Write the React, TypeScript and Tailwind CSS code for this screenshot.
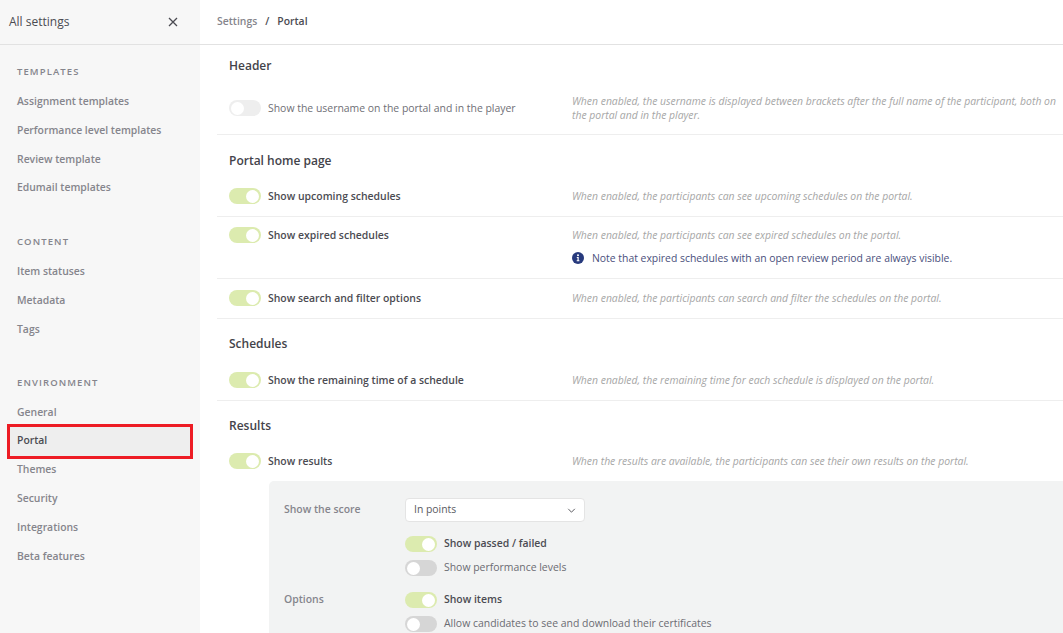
import React from "react";

const font = { fontFamily: '"Open Sans", sans-serif' };

function Toggle({ on, tone = "light" }: { on?: boolean; tone?: "light" | "mid" }) {
  const track = on ? "bg-[#dcebaf]" : tone === "mid" ? "bg-[#d6d6d6]" : "bg-[#eeeeee]";
  return (
    <span className={`flex h-[16px] w-[32px] shrink-0 items-center rounded-full px-[2px] ${track} ${on ? "justify-end" : "justify-start"}`}>
      <span className="h-[13px] w-[13px] rounded-full bg-white" />
    </span>
  );
}

function SideGroup({ title, items, className }: { title: string; items: string[]; className: string }) {
  return (
    <div className={className}>
      <div className="pl-[17px] text-[9.5px] leading-[14px] font-semibold tracking-[1.1px] text-[#85858c]">{title}</div>
      <div className="mt-[8.5px]">
        {items.map((i) => {
          const active = i === "Portal";
          return (
            <div key={i} className={`relative flex h-[28.8px] items-center text-[10.4px] font-semibold ${active ? "mx-[8px] bg-[#eeeeee] pl-[9px] text-[#4b4b52]" : "pl-[17px] text-[#85858c]"}`}>
              {i}
              {active && <span className="absolute -top-[3px] -right-[1px] -bottom-[3px] -left-[1px] border-[3px] border-[#ed1c24]" />}
            </div>
          );
        })}
      </div>
    </div>
  );
}

function Row({ on, label, desc, note, heightClass, desc2 }: { on?: boolean; label: string; desc: string; note?: string; heightClass: string; desc2?: boolean }) {
  return (
    <div className={`flex border-b border-[#eeeeee] pl-[12px] ${heightClass}`}>
      <div className="flex w-[343px] shrink-0 items-start gap-[7px]">
        <Toggle on={on} />
        <span className={`text-[10.45px] leading-[16px] ${on ? "font-semibold text-[#4b4b52]" : "font-normal text-[#6f6f76]"}`}>{label}</span>
      </div>
      <div className="min-w-0 flex-1 pr-[4px]">
        <div className={`text-[10.4px] leading-[14px] text-[#a6a6a6] italic ${desc2 ? "-mt-[6px]" : "mt-[1px]"}`}>{desc}</div>
        {note && (
          <div className="mt-[9px] flex items-center gap-[8px] text-[10.4px] leading-[14px] text-[#4a4f7c]">
            <svg viewBox="0 0 12 12" className="h-[12px] w-[12px] shrink-0">
              <circle cx="6" cy="6" r="6" fill="#273a7d" />
              <circle cx="6" cy="3.2" r="1" fill="#fff" />
              <path d="M4.8 5h1.9v3.3h.7v1H4.7v-1h.8V6h-.7z" fill="#fff" />
            </svg>
            {note}
          </div>
        )}
      </div>
    </div>
  );
}

function Heading({ children, className }: { children: React.ReactNode; className: string }) {
  return <div className={`pl-[12px] text-[12px] leading-[18px] font-semibold text-[#43434a] ${className}`}>{children}</div>;
}

function SubToggle({ on, label, className }: { on?: boolean; label: string; className: string }) {
  return (
    <div className={`flex h-[16px] items-center gap-[7px] ${className}`}>
      <Toggle on={on} tone="mid" />
      <span className={`text-[10.45px] ${on ? "font-semibold text-[#4b4b52]" : "text-[#6b6b72]"}`}>{label}</span>
    </div>
  );
}

export default function App() {
  return (
    <div style={font} className="flex h-[633px] w-[1063px] overflow-hidden bg-white">
      <aside className="w-[200px] shrink-0 bg-[#f7f7f7]">
        <div className="flex h-[45px] items-center justify-between border-b border-[#e2e2e2] pr-[22px] pl-[9px]">
          <span className="text-[12px] text-[#4b4b52]">All settings</span>
          <svg viewBox="0 0 10 10" className="h-[10px] w-[10px]" stroke="#4b4b52" strokeWidth="1.3" fill="none">
            <path d="M1 1l8 8M9 1l-8 8" />
          </svg>
        </div>
        <SideGroup className="pt-[20px]" title="TEMPLATES" items={["Assignment templates", "Performance level templates", "Review template", "Edumail templates"]} />
        <SideGroup className="pt-[32.5px]" title="CONTENT" items={["Item statuses", "Metadata", "Tags"]} />
        <SideGroup className="pt-[31.5px]" title="ENVIRONMENT" items={["General", "Portal", "Themes", "Security", "Integrations", "Beta features"]} />
      </aside>

      <main className="min-w-0 flex-1">
        <div className="flex h-[45px] items-center border-b border-[#e2e2e2] pl-[17px] text-[10.4px] font-semibold">
          <span className="text-[#85858c]">Settings</span>
          <span className="mx-[8px] text-[#4b4b52]">/</span>
          <span className="text-[#4b4b52]">Portal</span>
        </div>
        <div className="pl-[17px]">
          <Heading className="pt-[12px]">Header</Heading>
          <Row heightClass="mt-[25px] h-[35px]" label="Show the username on the portal and in the player" desc2 desc="When enabled, the username is displayed between brackets after the full name of the participant, both on the portal and in the player." />
          <Heading className="pt-[17px]">Portal home page</Heading>
          <Row on heightClass="mt-[16px] h-[31px] pt-[2px]" label="Show upcoming schedules" desc="When enabled, the participants can see upcoming schedules on the portal." />
          <Row on heightClass="h-[62px] pt-[10px]" label="Show expired schedules" desc="When enabled, the participants can see expired schedules on the portal." note="Note that expired schedules with an open review period are always visible." />
          <Row on heightClass="h-[40px] pt-[11px]" label="Show search and filter options" desc="When enabled, the participants can search and filter the schedules on the portal." />
          <Heading className="pt-[16px]">Schedules</Heading>
          <Row on heightClass="mt-[17px] h-[31px] pt-[2px]" label="Show the remaining time of a schedule" desc="When enabled, the remaining time for each schedule is displayed on the portal." />
          <Heading className="pt-[16px]">Results</Heading>
          <div className="mt-[18px] flex pl-[12px]">
            <div className="flex w-[343px] shrink-0 items-start gap-[7px]">
              <Toggle on />
              <span className="text-[10.45px] leading-[16px] font-semibold text-[#4b4b52]">Show results</span>
            </div>
            <div className="mt-[1px] text-[10.4px] leading-[14px] text-[#a6a6a6] italic">When the results are available, the participants can see their own results on the portal.</div>
          </div>
          <div className="mt-[12px] ml-[52px] h-[160px] rounded-l-[5px] bg-[#f2f3f3] pt-[17px] pl-[15px]">
            <div className="flex">
              <div className="w-[121px] shrink-0 pt-[3px] text-[10.45px] leading-[16px] font-semibold text-[#85858c]">Show the score</div>
              <div className="flex h-[24px] w-[180px] items-center justify-between rounded-[4px] border border-[#e4e4e4] bg-white pr-[8px] pl-[8px] text-[10.4px] text-[#5a5a61]">
                In points
                <svg viewBox="0 0 10 6" className="h-[5px] w-[9px]" stroke="#4b4b52" strokeWidth="1.1" fill="none">
                  <path d="M1 1l4 4 4-4" />
                </svg>
              </div>
            </div>
            <SubToggle on label="Show passed / failed" className="mt-[14px] ml-[121px]" />
            <SubToggle label="Show performance levels" className="mt-[8px] ml-[121px]" />
            <div className="mt-[16px] flex">
              <div className="w-[121px] shrink-0 text-[10.45px] leading-[14px] font-semibold text-[#85858c]">Options</div>
              <SubToggle on label="Show items" className="" />
            </div>
            <SubToggle label="Allow candidates to see and download their certificates" className="mt-[8px] ml-[121px]" />
          </div>
        </div>
      </main>
    </div>
  );
}
